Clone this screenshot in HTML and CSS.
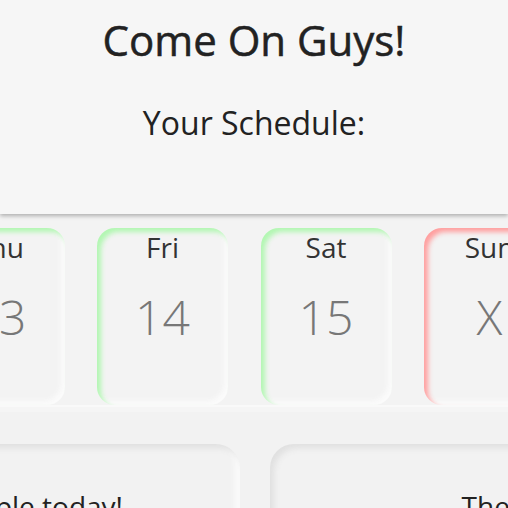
FILE: index.html
```html
<!DOCTYPE html>
<html>
<head>
<meta charset="utf-8">
<link rel="stylesheet" href="styles.css">
</head>
<body>
<header class="header">
  <h1 class="title">Come On Guys!</h1>
  <h2 class="subtitle">Your Schedule:</h2>
</header>
<section class="days">
  <div class="day day-on">
    <div class="day-name">Thu</div>
    <div class="day-num">13</div>
  </div>
  <div class="day day-on">
    <div class="day-name">Fri</div>
    <div class="day-num">14</div>
  </div>
  <div class="day day-on">
    <div class="day-name">Sat</div>
    <div class="day-num">15</div>
  </div>
  <div class="day day-off">
    <div class="day-name">Sun</div>
    <div class="day-num">X</div>
  </div>
</section>
<section class="panels">
  <div class="panel panel-left">
    <p class="panel-text">Two people today!</p>
  </div>
  <div class="panel panel-right">
    <p class="panel-text">The Gang</p>
  </div>
</section>
</body>
</html>
```
FILE: styles.css
```css
html, body {
  margin: 0;
  padding: 0;
}
body {
  background: #f2f2f2;
  font-family: "Open Sans", "DejaVu Sans", sans-serif;
  overflow: hidden;
  width: 508px;
  height: 508px;
}
.header {
  height: 214px;
  background: #f6f6f6;
  box-shadow: 0 2px 4px rgba(0, 0, 0, 0.28);
  text-align: center;
  position: relative;
  z-index: 1;
  display: flex;
  flex-direction: column;
  align-items: center;
}
.title {
  margin: 10px 0 0;
  font-size: 42px;
  font-weight: 500;
  color: #222;
  line-height: 60px;
  -webkit-text-stroke: 0.5px #222;
}
.subtitle {
  margin: 31px 0 0;
  font-size: 32px;
  font-weight: 400;
  color: #222;
  line-height: 44px;
}
.days {
  display: flex;
  gap: 32.5px;
  padding: 14px 0 7px;
  margin-left: -66.5px;
  background: linear-gradient(to bottom, #f3f3f3 calc(100% - 7px), #f9f9f9 calc(100% - 7px), #f9f9f9 calc(100% - 5px), #f5f5f5 calc(100% - 5px));
  width: 700px;
}
.day {
  flex: 0 0 131px;
  height: 177px;
  border-radius: 18px;
  background: #f3f3f3;
  display: flex;
  flex-direction: column;
  align-items: center;
  box-sizing: border-box;
}
.day-on {
  box-shadow: inset 4px 4px 5px #b2f7b2, inset -4px -4px 5px #fbfbfb;
}
.day-off {
  box-shadow: inset 4px 4px 5px #ff9f9f, inset -4px -4px 5px #fbfbfb;
}
.day-name {
  margin-top: 0;
  font-size: 28px;
  line-height: 38px;
  color: #333;
}
.day-num {
  margin-top: 19px;
  font-size: 48px;
  font-weight: 300;
  line-height: 64px;
  color: #777;
}
.panels {
  display: flex;
  gap: 30px;
  margin-top: 32px;
  margin-left: -245px;
  width: 1100px;
}
.panel {
  height: 200px;
  border-radius: 24px;
  background: #f2f2f2;
  box-shadow: inset 4px 4px 6px #e0e0e0, inset -4px -4px 6px #fdfdfd;
  text-align: center;
  box-sizing: border-box;
}
.panel-left {
  flex: 0 0 485px;
  padding-left: 12px;
}
.panel-right {
  flex: 0 0 507px;
}
.panel-text {
  margin: 43px 0 0;
  font-size: 28px;
  line-height: 38px;
  color: #222;
}
```
